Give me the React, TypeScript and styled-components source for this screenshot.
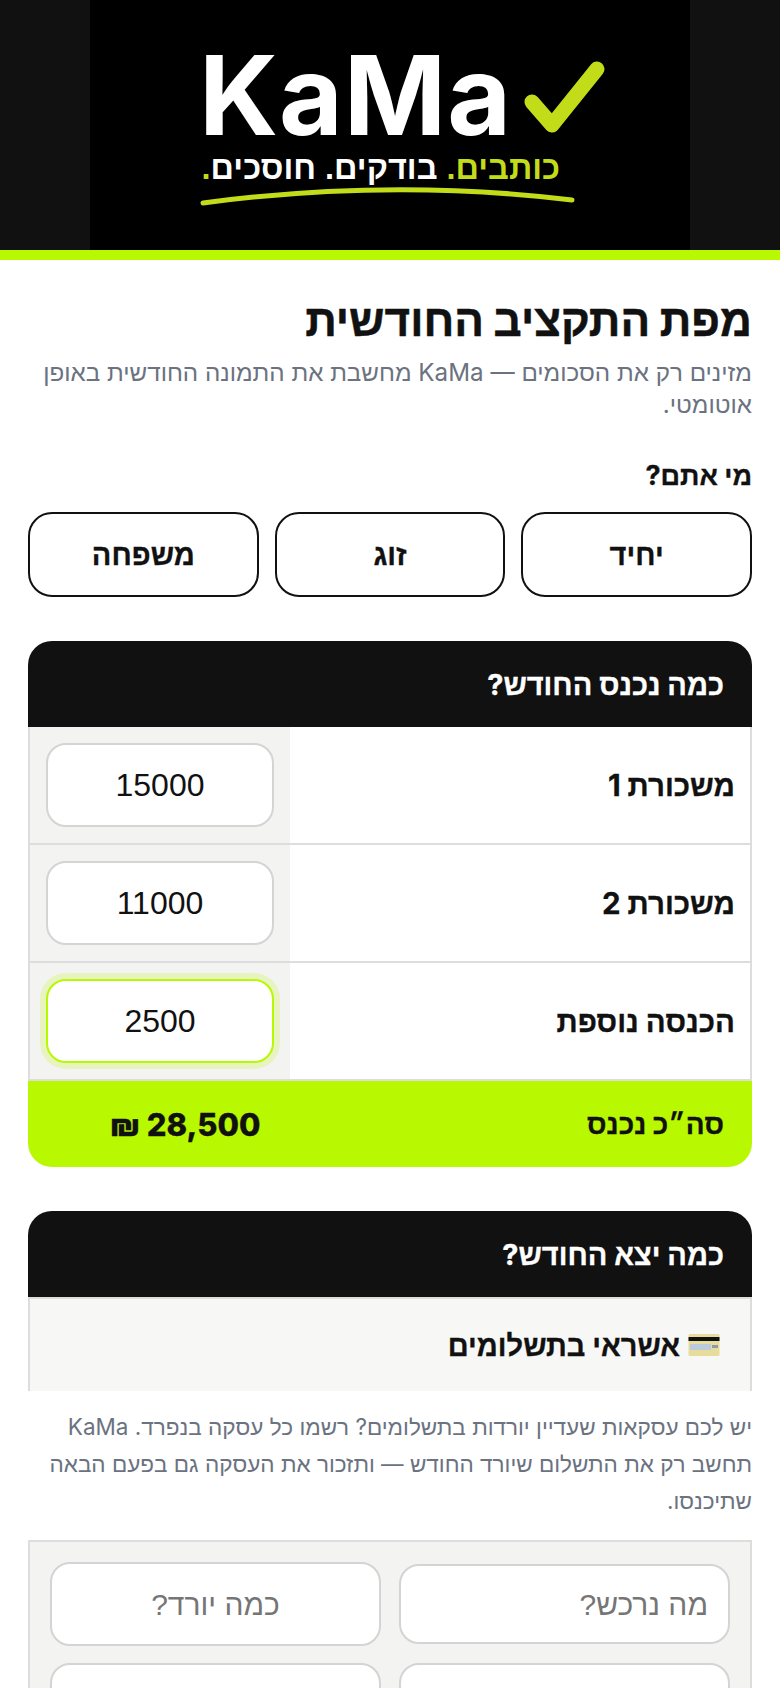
import React from "react";
import styled, { createGlobalStyle } from "styled-components";

const Global = createGlobalStyle`
  html, body { margin: 0; padding: 0; background: #fff; }
  * { box-sizing: border-box; }
  body { font-family: "Inter", "Liberation Sans", sans-serif; color: #111; }
`;
const Page = styled.div`
  width: 780px; height: 1688px; overflow: hidden; direction: rtl; background: #fff;
`;
const Header = styled.header`
  height: 260px; background: #111; border-bottom: 10px solid #b8f800;
  display: flex; justify-content: center;
`;
const LogoSvg = styled.svg`
  width: 600px; height: 250px; display: block; background: #000;
`;
const Main = styled.main`
  padding: 0 28px; display: flex; flex-direction: column;
`;
const Title = styled.h1`
  margin: 32px 0 0; font-size: 44px; line-height: 56px; font-weight: 800; color: #111;
  -webkit-text-stroke: 0.5px #111;
`;
const Subtitle = styled.p`
  margin: 9px 0 0; font-size: 24.2px; line-height: 32px; color: #6b7280;
`;
const Question = styled.div`
  margin-top: 37px; font-size: 27px; line-height: 36px; font-weight: 700; color: #111;
  -webkit-text-stroke: 0.3px #111;
`;
const Choices = styled.div`
  margin-top: 18px; display: grid; grid-template-columns: repeat(3, 1fr); gap: 16px;
`;
const Choice = styled.button`
  height: 85px; border: 2px solid #111; border-radius: 24px; background: #fff; color: #111;
  font: 700 29px "Inter", "Liberation Sans", sans-serif;
  -webkit-text-stroke: 0.3px #111;
`;
const Card = styled.section`
  margin-top: 44px; border-radius: 24px 24px 0 0; overflow: hidden;
`;
const CardHead = styled.h2`
  margin: 0; height: 86px; display: flex; align-items: center; padding: 0 28px;
  background: #111; color: #fff; font-size: 29px; font-weight: 700;
  -webkit-text-stroke: 0.3px #fff;
`;
const Row = styled.div`
  display: grid; grid-template-columns: 1fr 260px; height: 118px;
  border: 2px solid #ddd; border-top: 0;
`;
const RowLabel = styled.div`
  display: flex; align-items: center; padding: 0 15px; font-size: 29.5px; font-weight: 700;
  -webkit-text-stroke: 0.3px #111;
`;
const RowCell = styled.div`
  background: #f3f3f1; padding: 16px; display: flex; align-items: center;
`;
const Field = styled.input<{ $focus?: boolean; $align?: string; $h?: number }>`
  width: 100%; height: ${(p) => p.$h || 84}px; border-radius: 20px; background: #fff; outline: none; direction: rtl;
  font: 400 32px "Liberation Sans", sans-serif; color: #111;
  text-align: ${(p) => p.$align || "center"};
  padding: 0 20px;
  border: 2px solid ${(p) => (p.$focus ? "#b8f800" : "#d4d4d4")};
  box-shadow: ${(p) => (p.$focus ? "0 0 0 6px rgba(184,248,0,.2)" : "none")};
  &::placeholder { color: #757575; opacity: 1; font-size: 30px; }
`;
const Total = styled.div`
  height: 86px; background: #b8f800; border-radius: 0 0 24px 24px; padding: 0 28px 0 82px;
  display: flex; align-items: center; justify-content: space-between;
  color: #111; font-size: 28px; font-weight: 700;
  -webkit-text-stroke: 0.3px #111;
`;
const TotalValue = styled.span`
  font-size: 31px; font-weight: 800;
`;
const SubHead = styled.div`
  height: 94px; padding: 0 30px 0 0; background: #f7f7f5; border: 2px solid #ddd; border-bottom: 0;
  display: flex; align-items: center; gap: 8px; font-size: 29px; font-weight: 700;
  -webkit-text-stroke: 0.3px #111;
`;
const Note = styled.p`
  margin: 17px 0 0; font-size: 22.5px; line-height: 37px; color: #6b7280;
`;
const Form = styled.div`
  margin-top: 21px; background: #f3f3f1; border: 2px solid #ddd; padding: 20px 20px;
  display: grid; grid-template-columns: 331px 331px; justify-content: space-between; row-gap: 17px;
  height: 300px; align-items: center; align-content: start;
`;

export default function App() {
  return (
    <Page>
      <Global />
      <Header>
        <LogoSvg viewBox="90 0 600 250" aria-label="KaMa">
          <text x="199" y="135" direction="ltr" fontFamily="Inter, sans-serif" fontWeight="700" fontSize="110" fill="#fff" textLength="312">KaMa</text>
          <path d="M532 102L552 125L597 69" fill="none" stroke="#c3dc19" strokeWidth="15" strokeLinecap="round" strokeLinejoin="round" />
          <text x="560" y="179" direction="rtl" fontFamily="Liberation Sans, sans-serif" fontWeight="700" fontSize="32.5" fill="#fff">
            <tspan fill="#c3dc19">כותבים.</tspan> בודקים. חוסכים<tspan fill="#c3dc19">.</tspan>
          </text>
          <path d="M203 203Q390 178 572 200" fill="none" stroke="#c3dc19" strokeWidth="5" strokeLinecap="round" />
        </LogoSvg>
      </Header>
      <Main>
        <Title>מפת התקציב החודשית</Title>
        <Subtitle>מזינים רק את הסכומים — KaMa מחשבת את התמונה החודשית באופן אוטומטי.</Subtitle>
        <Question>מי אתם?</Question>
        <Choices>
          <Choice>יחיד</Choice>
          <Choice>זוג</Choice>
          <Choice>משפחה</Choice>
        </Choices>
        <Card>
          <CardHead>כמה נכנס החודש?</CardHead>
          <Row><RowLabel>משכורת 1</RowLabel><RowCell><Field readOnly value="15000" /></RowCell></Row>
          <Row><RowLabel>משכורת 2</RowLabel><RowCell><Field readOnly value="11000" /></RowCell></Row>
          <Row><RowLabel>הכנסה נוספת</RowLabel><RowCell><Field readOnly $focus value="2500" /></RowCell></Row>
          <Total><span>סה״כ נכנס</span><TotalValue>28,500 ₪</TotalValue></Total>
        </Card>
        <Card>
          <CardHead>כמה יצא החודש?</CardHead>
          <SubHead>
            <svg width="32" height="24" viewBox="0 0 32 24" aria-hidden="true">
              <rect x="0.5" y="1" width="31" height="22" rx="1.5" fill="#e8dc9c" />
              <rect x="0.5" y="4" width="31" height="4" fill="#111" />
              <rect x="2" y="11" width="21" height="6" fill="#b9cbdc" />
              <rect x="24" y="12" width="6" height="3" fill="#8f99a8" />
            </svg>
            <span>אשראי בתשלומים</span>
          </SubHead>
        </Card>
        <Note>יש לכם עסקאות שעדיין יורדות בתשלומים? רשמו כל עסקה בנפרד. KaMa תחשב רק את התשלום שיורד החודש — ותזכור את העסקה גם בפעם הבאה שתיכנסו.</Note>
        <Form>
          <Field readOnly $h={80} placeholder="מה נרכש?" $align="right" />
          <Field readOnly placeholder="כמה יורד?" />
          <Field readOnly />
          <Field readOnly />
        </Form>
      </Main>
    </Page>
  );
}
